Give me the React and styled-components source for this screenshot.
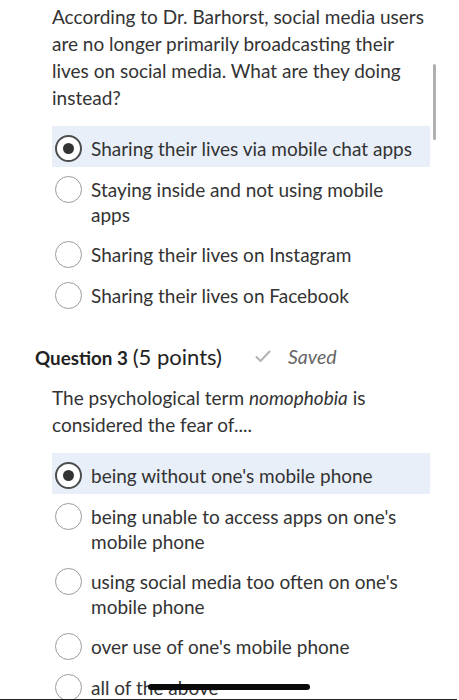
import React from "react";
import styled, { createGlobalStyle } from "styled-components";

const GlobalStyle = createGlobalStyle`
  html, body {
    margin: 0;
    padding: 0;
    background: #ffffff;
  }
  body {
    font-family: Lato, "Open Sans", sans-serif;
    color: #333333;
  }
`;

const questions = [
  {
    id: 2,
    prompt: (
      <>
        According to Dr. Barhorst, social media users are no longer primarily
        broadcasting their lives on social media. What are they doing instead?
      </>
    ),
    options: [
      "Sharing their lives via mobile chat apps",
      "Staying inside and not using mobile apps",
      "Sharing their lives on Instagram",
      "Sharing their lives on Facebook",
    ],
    selected: 0,
  },
  {
    id: 3,
    heading: true,
    prompt: (
      <>
        The psychological term <em>nomophobia</em> is considered the fear
        of....
      </>
    ),
    options: [
      "being without one's mobile phone",
      "being unable to access apps on one's mobile phone",
      "using social media too often on one's mobile phone",
      "over use of one's mobile phone",
      "all of the above",
    ],
    selected: 0,
  },
];

const CheckIcon = () => (
  <svg width="16" height="13" viewBox="0 0 16 13" fill="none">
    <path
      d="M1.5 7 L5.5 11 L14.5 1.5"
      stroke="#b3b3b3"
      strokeWidth="2"
      strokeLinecap="round"
      strokeLinejoin="round"
    />
  </svg>
);

const QuizPage = () => {
  return (
    <Page>
      <GlobalStyle />
      {questions.map((q) => (
        <Question key={q.id}>
          {q.heading && (
            <Heading>
              <Title>
                <strong>Question {q.id}</strong> <Points>(5 points)</Points>
              </Title>
              <SavedTag>
                <CheckIcon />
                <span>Saved</span>
              </SavedTag>
            </Heading>
          )}
          <Prompt>{q.prompt}</Prompt>
          <Options>
            {q.options.map((opt, i) => (
              <Option key={opt} $active={i === q.selected}>
                <Radio $checked={i === q.selected} />
                <Label>{opt}</Label>
              </Option>
            ))}
          </Options>
        </Question>
      ))}
      <ScrollThumb />
      <HomeIndicator />
      <BottomEdge />
    </Page>
  );
};

const Page = styled.div`
  position: relative;
  width: 459px;
  height: 700px;
  overflow: hidden;
  padding: 3px 0 0 0;
  box-sizing: border-box;
`;

const Question = styled.section`
  display: flex;
  flex-direction: column;
  & + & {
    margin-top: 27px;
  }
`;

const Heading = styled.div`
  display: flex;
  align-items: center;
  gap: 33px;
  padding-left: 35px;
  height: 30px;
  margin-bottom: 13px;
`;

const Title = styled.div`
  font-size: 18.8px;
  color: #222222;
  white-space: nowrap;
  strong {
    font-weight: 700;
  }
`;

const Points = styled.span`
  font-size: 22px;
  font-weight: 400;
`;

const SavedTag = styled.div`
  display: flex;
  align-items: center;
  gap: 17px;
  font-size: 19.5px;
  font-style: italic;
  color: #666666;
  white-space: nowrap;
`;

const Prompt = styled.p`
  margin: 0 26px 0 52px;
  font-size: 19px;
  line-height: 27px;
  color: #333333;
  em {
    font-style: italic;
  }
`;

const Options = styled.div`
  display: flex;
  flex-direction: column;
  margin: 15px 29px 0 52px;
`;

const Option = styled.div`
  display: flex;
  align-items: flex-start;
  gap: 9px;
  padding: 10px 10px 5px 3px;
  background: ${(p) => (p.$active ? "#e8eff9" : "transparent")};
`;

const Radio = styled.span`
  flex: none;
  width: 27px;
  height: 27px;
  box-sizing: border-box;
  border-radius: 50%;
  margin-top: -1px;
  border: ${(p) => (p.$checked ? "2px solid #4d4d4d" : "1.5px solid #9a9a9a")};
  background: #ffffff;
  display: flex;
  align-items: center;
  justify-content: center;
  &::after {
    content: "";
    display: ${(p) => (p.$checked ? "block" : "none")};
    width: 11px;
    height: 11px;
    border-radius: 50%;
    background: #333333;
  }
`;

const Label = styled.span`
  font-size: 19px;
  line-height: 25px;
  color: #333333;
`;

const ScrollThumb = styled.div`
  position: absolute;
  left: 433px;
  top: 64px;
  width: 3px;
  height: 76px;
  border-radius: 2px;
  background: #b0b0b0;
`;

const HomeIndicator = styled.div`
  position: absolute;
  left: 148px;
  top: 684px;
  width: 162px;
  height: 6px;
  border-radius: 3px;
  background: #0a0a0a;
`;

const BottomEdge = styled.div`
  position: absolute;
  left: 0;
  right: 2px;
  bottom: 0;
  height: 1.5px;
  background: #222222;
`;

export default QuizPage;
